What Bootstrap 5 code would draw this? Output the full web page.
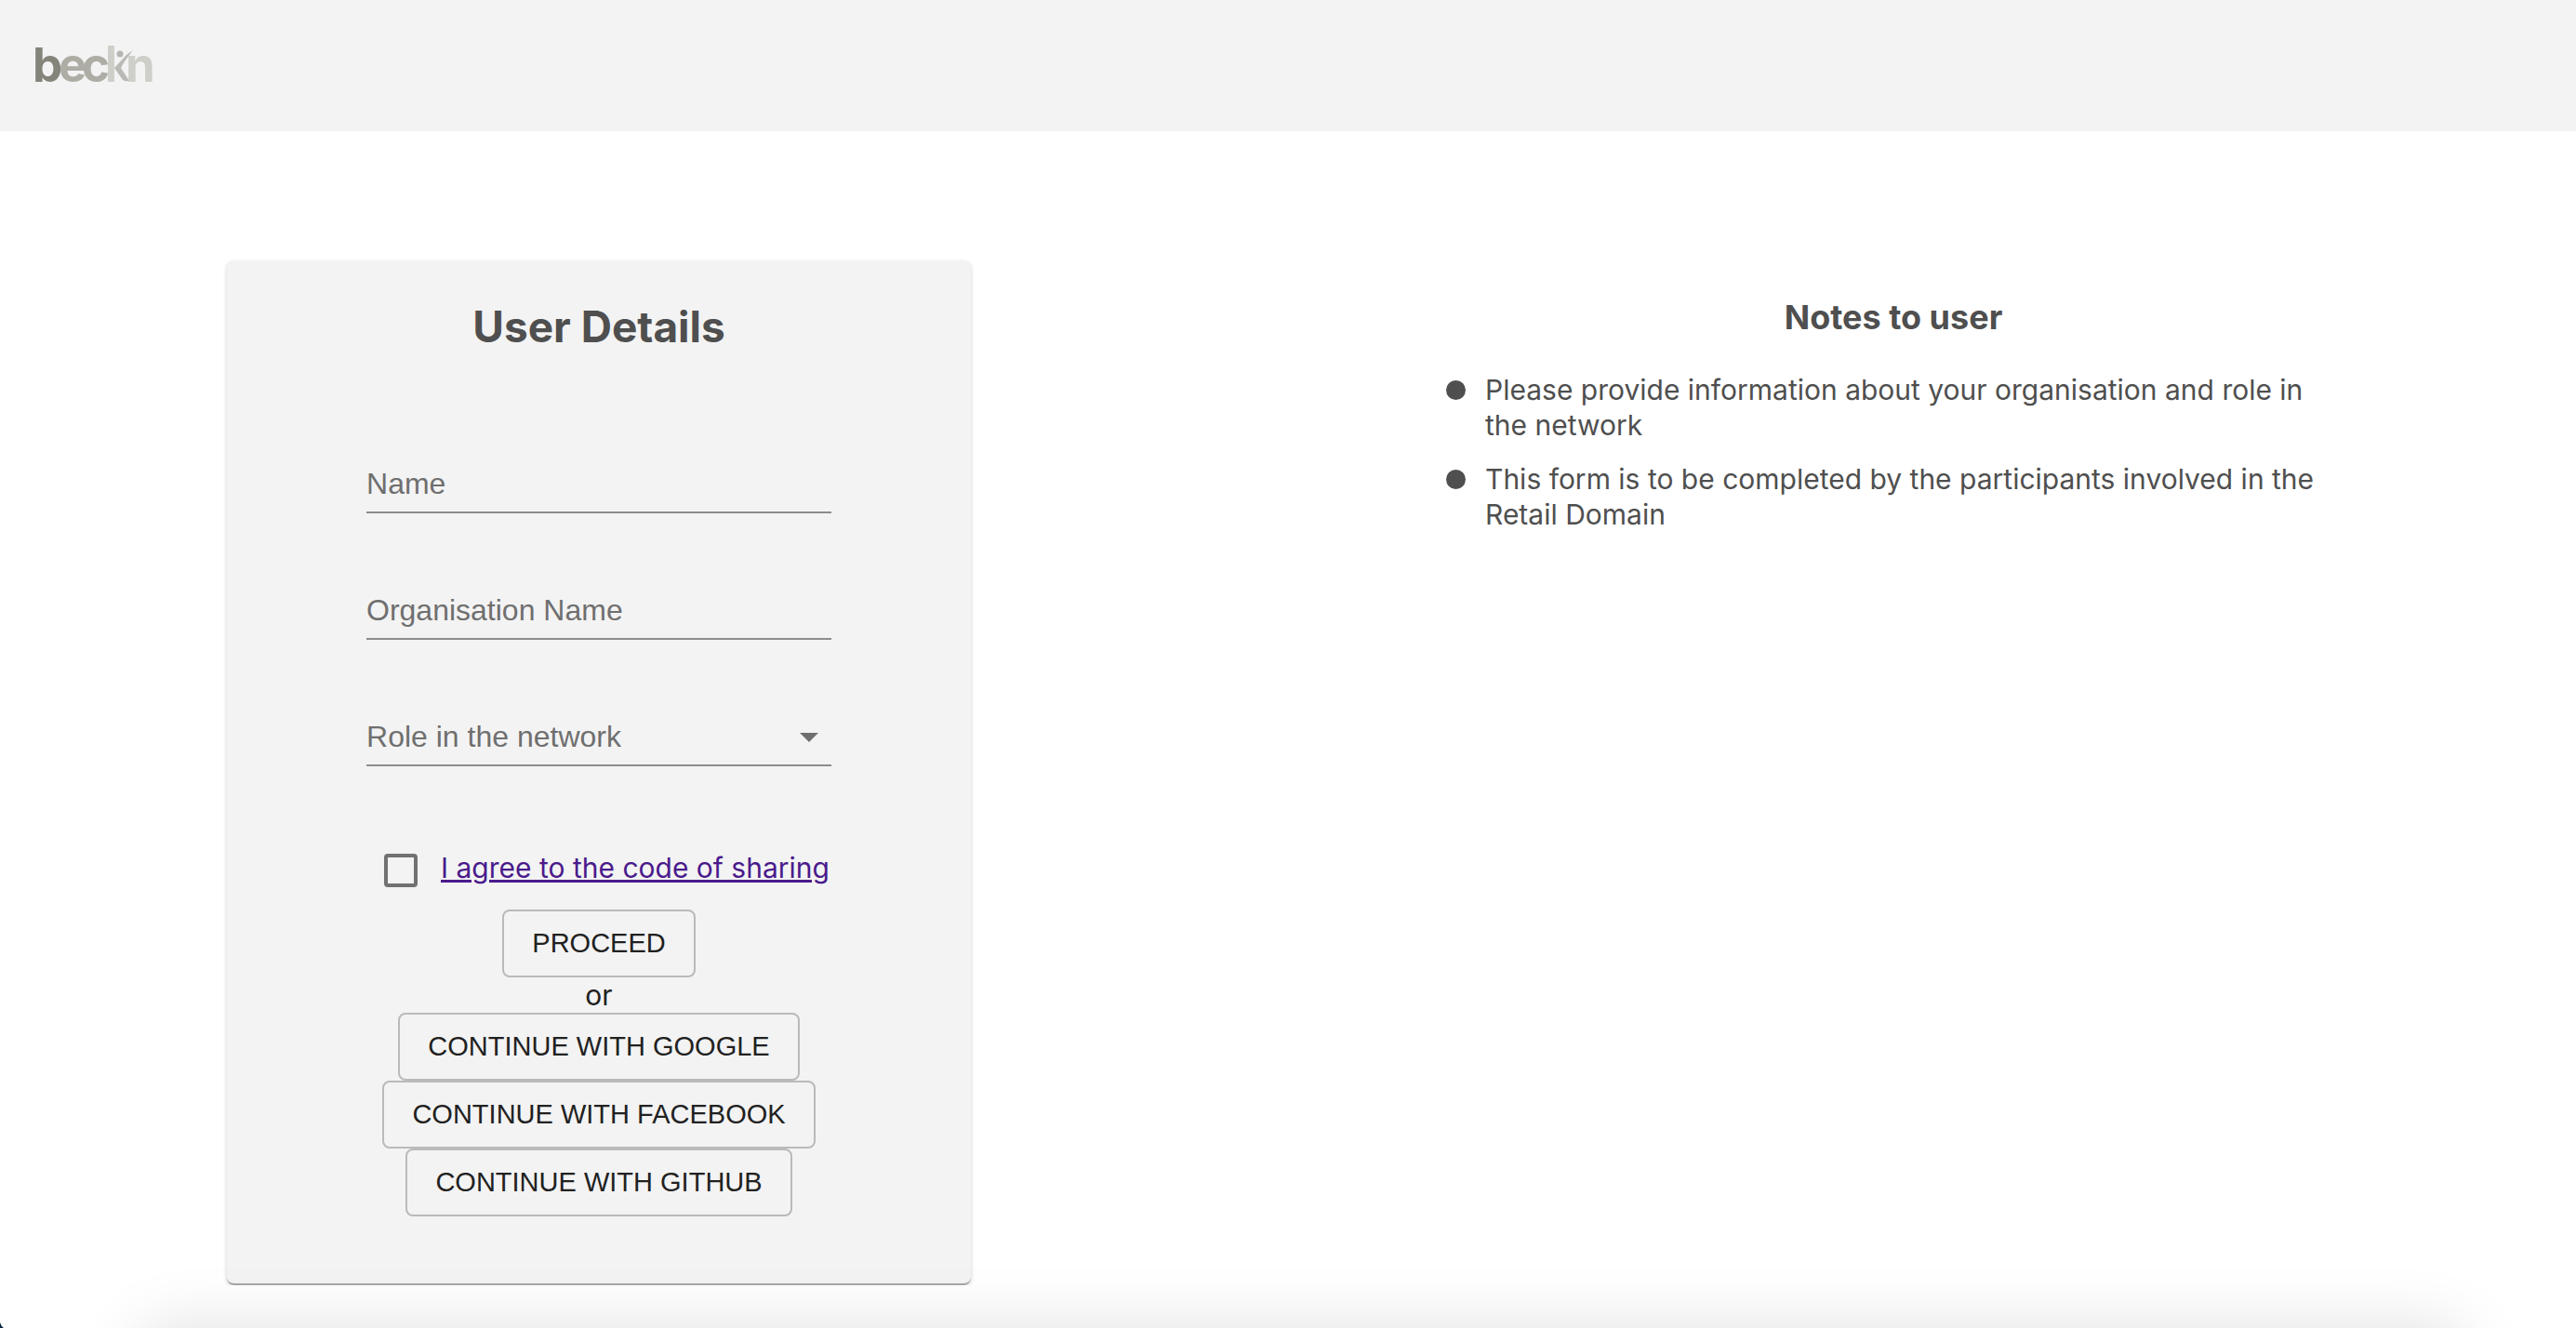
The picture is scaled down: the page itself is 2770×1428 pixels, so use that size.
<!DOCTYPE html>
<html lang="en">
<head>
<meta charset="utf-8">
<meta name="viewport" content="width=device-width, initial-scale=1">
<title>beckn – User Details</title>
<link href="https://cdn.jsdelivr.net/npm/bootstrap@5.3.0/dist/css/bootstrap.min.css" rel="stylesheet">
<style>
  body { font-family: Inter, "Liberation Sans", sans-serif; font-size: 30px; line-height: 38px; color: #212121; background: #fff; }
  .site-header { background: #f3f3f3; height: 141px; padding: 0 34px; }
  .brand-logo { display: block; width: 140px; height: 80px; overflow: visible; }
  .form-side { flex: 0 0 46.5%; padding-top: 140px; }
  .notes-side { flex: 1 1 0; padding: 176px 0 0 14px; }
  .user-card { width: 800px; max-width: 100%; border: 0; border-bottom: 2px solid #a6a6a6; border-radius: 8px; background: #f3f3f3; padding: 40px 150px 72px;
    box-shadow: 0 1px 4px rgba(0,0,0,.2); }
  .card-heading { font-size: 46px; line-height: 60px; font-weight: 700; color: #4f4f4f; margin-bottom: 107px; }
  .field-line { font-family: "Liberation Sans", Arial, sans-serif; font-size: 32px; line-height: 38px; color: #6f6f6f; background: transparent;
    border: 0; border-bottom: 2px solid #8c8c8c; border-radius: 0; padding: 12px 0; height: 64px; width: 100%; appearance: none; outline: 0; }
  .field-name { font-family: "Liberation Sans", Arial, sans-serif; font-size: 32px; line-height: 38px; color: #6f6f6f; left: 0; top: 13px; pointer-events: none; }
  .field-line:not(:placeholder-shown):not(select) + .field-name, select:valid + .field-name { display: none; }
  .field-stack { gap: 72px; width: 500px; max-width: 100%; }
  .select-arrow { right: 14px; top: 28px; pointer-events: none; }
  .agree-row { gap: 25px; margin: 82px 0 24px; padding-left: 19px; }
  .agree-box { appearance: none; width: 36px; height: 36px; border: 4px solid #717171; border-radius: 4px; margin: 12px 0 0; flex: none; }
  .agree-box:checked { background: #717171; }
  .agree-link { color: #4a1a8c; text-decoration-thickness: 3px; white-space: nowrap; padding-top: 8px; }
  .line-btn { font-family: "Liberation Sans", Arial, sans-serif; font-size: 29px; line-height: 49px; color: #212121; border: 2px solid #bababa; border-radius: 8px; padding: 10px 30px; }
  .notes-block { width: 962px; max-width: 100%; color: #4f4f4f; }
  .notes-heading { font-size: 36px; line-height: 48px; font-weight: 700; margin-bottom: 35px; }
  .notes-items { gap: 20px; }
  .notes-items li { gap: 21px; }
  .bullet-dot { width: 21px; height: 21px; border-radius: 50%; background: #4f4f4f; flex: none; margin-top: 9px; }
  .bottom-shade { position: fixed; left: 150px; right: 120px; bottom: -200px; height: 200px; border-radius: 30px; box-shadow: 0 0 70px rgba(0,0,0,.13); pointer-events: none; }
  .corner-mark { position: fixed; left: 0; bottom: 0; }
</style>
<script src="https://cdn.jsdelivr.net/npm/bootstrap@5.3.0/dist/js/bootstrap.bundle.min.js"></script>
</head>
<body>
<header class="site-header d-flex align-items-center">
  <a href="#" aria-label="beckn home">
    <svg class="brand-logo" viewBox="-4 -19 140 80" font-family="Inter, sans-serif" font-weight="700" font-size="51">
      <text x="-3" y="38" fill="#84847b">b</text>
      <text x="25" y="38" fill="#adada6">e</text>
      <text x="50" y="38" fill="#adada6">c</text>
      <rect x="78" y="-1" width="7" height="39" fill="#cfcfc9"/>
      <text x="97" y="38" fill="#cfcfc9">n</text>
      <circle cx="91" cy="8" r="3.500" fill="#b5b5b2"/>
      <path d="M105 4 L98 9 L85 23 L94 36 Q97 38 101 37 L92 23 Q94 18 105 4Z" fill="#b9b9b6"/>
    </svg>
  </a>
</header>
<main class="d-flex">
  <section class="form-side d-flex justify-content-center align-items-start">
    <form class="user-card card align-items-center">
      <h1 class="card-heading text-center">User Details</h1>
      <div class="field-stack d-flex flex-column">
        <div class="position-relative">
          <input class="field-line d-block" id="userName" type="text" placeholder=" ">
          <label class="field-name position-absolute" for="userName">Name</label>
        </div>
        <div class="position-relative">
          <input class="field-line d-block" id="orgName" type="text" placeholder=" ">
          <label class="field-name position-absolute" for="orgName">Organisation Name</label>
        </div>
        <div class="position-relative">
          <select class="field-line d-block" id="netRole" required><option value=""></option></select>
          <label class="field-name position-absolute" for="netRole">Role in the network</label>
          <svg class="select-arrow position-absolute" width="20" height="10" viewBox="0 0 20 10"><path d="M0 0h20L10 10z" fill="#6f6f6f"/></svg>
        </div>
      </div>
      <div class="agree-row d-flex align-self-start">
        <input class="agree-box" type="checkbox" id="agreeCode" aria-labelledby="agreeText">
        <a class="agree-link" id="agreeText" href="#">I agree to the code of sharing</a>
      </div>
      <button class="btn line-btn" type="submit">PROCEED</button>
      <div>or</div>
      <button class="btn line-btn" type="button">CONTINUE WITH GOOGLE</button>
      <button class="btn line-btn" type="button">CONTINUE WITH FACEBOOK</button>
      <button class="btn line-btn" type="button">CONTINUE WITH GITHUB</button>
    </form>
  </section>
  <section class="notes-side d-flex justify-content-center align-items-start">
    <div class="notes-block">
      <h2 class="notes-heading text-center">Notes to user</h2>
      <ul class="notes-items list-unstyled d-flex flex-column mb-0">
        <li class="d-flex"><span class="bullet-dot"></span><span>Please provide information about your organisation and role in the network</span></li>
        <li class="d-flex"><span class="bullet-dot"></span><span>This form is to be completed by the participants involved in the Retail Domain</span></li>
      </ul>
    </div>
  </section>
</main>
<div class="bottom-shade"></div>
<svg class="corner-mark" width="4" height="6" viewBox="0 0 4 6"><path d="M0 0Q1 4 4 6H0z" fill="#0b2440"/></svg>
</body>
</html>
